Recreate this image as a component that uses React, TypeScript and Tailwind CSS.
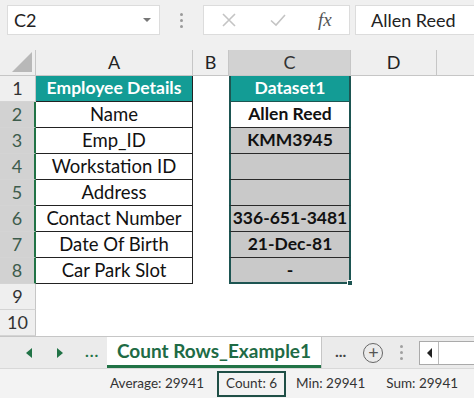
import { ReactNode } from 'react'

const font = { fontFamily: 'Lato, "Open Sans", sans-serif' }

const labels = ['Name', 'Emp_ID', 'Workstation ID', 'Address', 'Contact Number', 'Date Of Birth', 'Car Park Slot']
const values = ['Allen Reed', 'KMM3945', '', '', '336-651-3481', '21-Dec-81', '-']

function RowHead({ n, active }: { n: number; active?: boolean }) {
  return (
    <div
      className={`w-[36px] shrink-0 flex items-center justify-center text-[18px] border-b border-[#d4d4d4] ${
        active ? 'bg-[#d2d2d2] text-[#3d5c4c] border-r-2 border-r-[#217346]' : 'bg-[#efefef] text-[#333] border-r border-r-[#c6c6c6]'
      }`}
    >
      {n}
    </div>
  )
}

function Row({ n, active, a, c }: { n: number; active?: boolean; a: ReactNode; c: ReactNode }) {
  return (
    <div className="flex h-[26px]">
      <RowHead n={n} active={active} />
      <div className="w-[157px] shrink-0">{a}</div>
      <div className="w-[36px] shrink-0" />
      <div className="w-[122px] shrink-0">{c}</div>
      <div className="flex-1" />
    </div>
  )
}

function ACell({ text }: { text: string }) {
  return (
    <div className="h-full flex items-center justify-center border-b border-r border-[#222] text-[18.5px] text-[#111] whitespace-nowrap">
      {text}
    </div>
  )
}

function CCell({ text, i }: { text: string; i: number }) {
  const white = i === 0
  return (
    <div
      className={`relative h-full flex items-center justify-center border-x-2 border-x-[#1d5552] text-[17.5px] font-bold text-[#111] whitespace-nowrap ${
        white ? 'bg-white' : 'bg-[#c9c9c9]'
      } ${i === 6 ? 'border-b-2 border-b-[#1d5552]' : 'border-b border-b-[#2a2a2a]'}`}
    >
      {text}
      {i === 6 && <span className="absolute -right-[4px] -bottom-[4px] w-[6px] h-[6px] bg-[#1d5552] border border-white" />}
    </div>
  )
}

export default function App() {
  return (
    <div className="w-[474px] h-[400px] overflow-hidden bg-white relative select-none" style={font}>
      {/* formula bar */}
      <div className="h-[50px] bg-[#f0f0f0] pt-[5px] flex items-start">
        <div className="ml-[7px] w-[153px] h-[30px] bg-white border border-[#dcdcdc] flex items-center pl-[6px] pr-[8px]">
          <span className="text-[18px] text-[#222] flex-1">C2</span>
          <span className="w-0 h-0 border-l-[4px] border-r-[4px] border-t-[4px] border-l-transparent border-r-transparent border-t-[#777]" />
        </div>
        <div className="w-[43px] h-[30px] flex flex-col items-center justify-center gap-[3px]">
          <span className="w-[3px] h-[3px] rounded-full bg-[#9a9a9a]" />
          <span className="w-[3px] h-[3px] rounded-full bg-[#9a9a9a]" />
          <span className="w-[3px] h-[3px] rounded-full bg-[#9a9a9a]" />
        </div>
        <div className="w-[147px] h-[30px] bg-white border border-[#dcdcdc] flex items-center">
          <svg width="16" height="16" viewBox="0 0 16 16" className="ml-[17px]">
            <path d="M2 2 L14 14 M14 2 L2 14" stroke="#c4c4c4" strokeWidth="1.6" />
          </svg>
          <svg width="16" height="14" viewBox="0 0 16 14" className="ml-[33px]">
            <path d="M1 7.5 L6 12 L15 2" stroke="#c4c4c4" strokeWidth="1.6" fill="none" />
          </svg>
          <span className="ml-[32px] text-[19px] italic text-[#555]" style={{ fontFamily: '"Liberation Serif", serif' }}>
            fx
          </span>
        </div>
        <div className="ml-[5px] flex-1 h-[30px] bg-white border border-[#dcdcdc] border-r-0 flex items-center pl-[15px] text-[18px] text-[#222]">
          Allen Reed
        </div>
      </div>

      {/* column headers */}
      <div className="flex h-[26px] bg-[#efefef] border-b border-[#c6c6c6] text-[18px] text-[#222]">
        <div className="w-[36px] shrink-0 border-r border-[#c6c6c6] flex items-end justify-end pr-[3px] pb-[3px]">
          <svg width="20" height="20" viewBox="0 0 20 20">
            <path d="M20 0 L20 20 L0 20 Z" fill="#b8b8b8" />
          </svg>
        </div>
        <div className="w-[157px] shrink-0 border-r border-[#c6c6c6] flex items-center justify-center">A</div>
        <div className="w-[36px] shrink-0 border-r border-[#c6c6c6] flex items-center justify-center">B</div>
        <div className="w-[122px] shrink-0 bg-[#d2d2d2] border-r border-[#c6c6c6] flex items-center justify-center text-[#333]">C</div>
        <div className="w-[86px] shrink-0 border-r border-[#c6c6c6] flex items-center justify-center">D</div>
        <div className="flex-1" />
      </div>

      {/* rows */}
      <Row
        n={1}
        a={<div className="h-full flex items-center justify-center bg-[#139c95] text-white font-bold text-[17.5px] border-r border-b border-[#222] whitespace-nowrap">Employee Details</div>}
        c={<div className="h-full flex items-center justify-center bg-[#139c95] text-white font-bold text-[17.5px] border-x-2 border-x-[#1d5552] border-b border-b-[#1d5552]">Dataset1</div>}
      />
      {labels.map((l, i) => (
        <Row key={l} n={i + 2} active a={<ACell text={l} />} c={<CCell text={values[i]} i={i} />} />
      ))}
      <Row n={9} a={null} c={null} />
      <Row n={10} a={null} c={null} />

      {/* sheet tabs */}
      <div className="h-[32px] bg-[#ebebeb] border-t border-[#c6c6c6] flex items-stretch">
        <div className="w-[107px] shrink-0 flex items-center text-[#217346]">
          <span className="ml-[26px] w-0 h-0 border-y-[5px] border-y-transparent border-r-[6px] border-r-[#217346]" />
          <span className="ml-[25px] w-0 h-0 border-y-[5px] border-y-transparent border-l-[6px] border-l-[#217346]" />
          <span className="ml-[22px] text-[16px] font-bold tracking-[1px] leading-none pb-[4px]">...</span>
        </div>
        <div className="w-[214px] shrink-0 bg-white border-b-[3px] border-[#217346] flex items-center justify-center text-[19px] font-bold text-[#1e6b45] whitespace-nowrap">
          Count Rows_Example1
        </div>
        <div className="flex items-center flex-1 border-l border-[#c6c6c6]">
          <span className="ml-[13px] text-[16px] font-bold text-[#444] leading-none pb-[4px]">...</span>
          <span className="ml-[17px] w-[20px] h-[20px] rounded-full border border-[#666] flex items-center justify-center text-[#555] text-[18px] leading-none pb-[2px]">+</span>
          <span className="ml-[17px] flex flex-col gap-[3px]">
            <span className="w-[3px] h-[3px] rounded-full bg-[#a0a0a0]" />
            <span className="w-[3px] h-[3px] rounded-full bg-[#a0a0a0]" />
            <span className="w-[3px] h-[3px] rounded-full bg-[#a0a0a0]" />
          </span>
          <div className="ml-[16px] h-[24px] flex-1 bg-white border border-[#aaa] border-r-0 flex items-center">
            <span className="ml-[7px] w-0 h-0 border-y-[5px] border-y-transparent border-r-[5px] border-r-[#222]" />
            <span className="ml-[6px] h-full w-px bg-[#bbb]" />
          </div>
        </div>
      </div>

      {/* status bar */}
      <div className="h-[30px] bg-[#f3f3f3] border-t border-[#d8d8d8] flex items-center text-[13.5px] text-[#333] whitespace-nowrap">
        <span className="ml-[110px] shrink-0">Average: 29941</span>
        <span className="ml-[13px] shrink-0 h-[26px] px-[7px] border-2 border-[#1f4f46] flex items-center">Count: 6</span>
        <span className="ml-[10px] shrink-0">Min: 29941</span>
        <span className="ml-[21px] shrink-0">Sum: 29941</span>
      </div>
    </div>
  )
}
